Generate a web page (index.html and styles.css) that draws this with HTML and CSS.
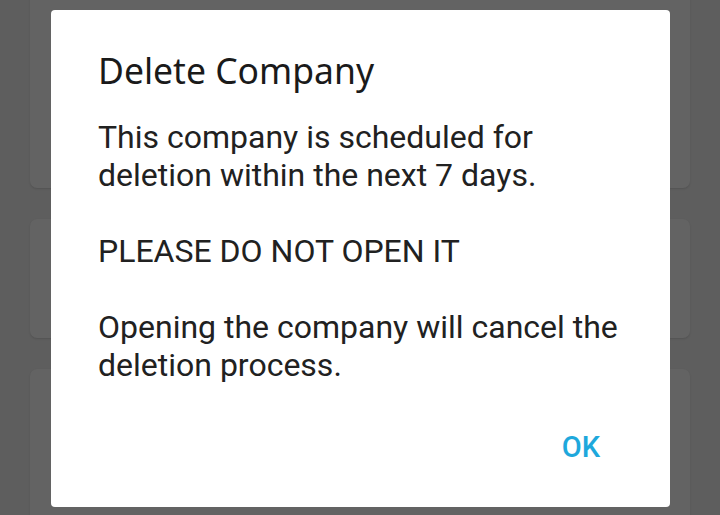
FILE: index.html
```html
<!DOCTYPE html>
<html>
<head>
<meta charset="utf-8">
<link rel="stylesheet" href="styles.css">
</head>
<body>
<div class="screen">
  <div class="cards">
    <div class="card card-1"></div>
    <div class="card card-2"></div>
    <div class="card card-3"></div>
  </div>
  <div class="dialog">
    <h1 class="dialog-title">Delete Company</h1>
    <div class="dialog-body">
      <p>This company is scheduled for deletion within the next 7 days.</p>
      <p>PLEASE DO NOT OPEN IT</p>
      <p>Opening the company will cancel the deletion process.</p>
    </div>
    <div class="dialog-actions">
      <button class="dialog-btn">OK</button>
    </div>
  </div>
</div>
</body>
</html>
```
FILE: styles.css
```css
html, body {
  margin: 0;
  padding: 0;
}
body {
  width: 720px;
  height: 515px;
  overflow: hidden;
  background: #5e5e5e;
  font-family: Roboto, "Noto Sans", sans-serif;
}
.screen {
  position: relative;
  width: 720px;
  height: 515px;
  overflow: hidden;
}
.cards {
  display: flex;
  flex-direction: column;
  gap: 31px;
  padding: 0 30px;
  margin-top: -20px;
}
.card {
  background: #636363;
  border-radius: 7px;
  box-shadow: 0 1px 2px rgba(0,0,0,0.12);
}
.card-1 { height: 208px; }
.card-2 { height: 119px; }
.card-3 { height: 200px; }

.dialog {
  position: absolute;
  left: 51px;
  top: 10px;
  width: 619px;
  height: 497px;
  box-sizing: border-box;
  background: #ffffff;
  border-radius: 4px;
  padding: 36px 40px 0 47px;
}
.dialog-title {
  margin: 0;
  font-family: "Noto Sans", sans-serif;
  font-weight: 400;
  font-size: 35.5px;
  line-height: 48px;
  color: #1a1a1a;
}
.dialog-body {
  margin-top: 24px;
  font-family: Roboto, sans-serif;
  font-size: 32px;
  line-height: 38px;
  color: #212121;
}
.dialog-body p {
  margin: 0 0 38px 0;
}
.dialog-body p:last-child {
  margin-bottom: 0;
}
.dialog-actions {
  display: flex;
  justify-content: flex-end;
  margin-top: 43.5px;
  padding-right: 30px;
}
.dialog-btn {
  border: 0;
  background: none;
  padding: 0;
  font-family: Roboto, sans-serif;
  font-weight: 500;
  font-size: 29px;
  line-height: 38px;
  color: #1ea8dc;
  cursor: pointer;
}
```
